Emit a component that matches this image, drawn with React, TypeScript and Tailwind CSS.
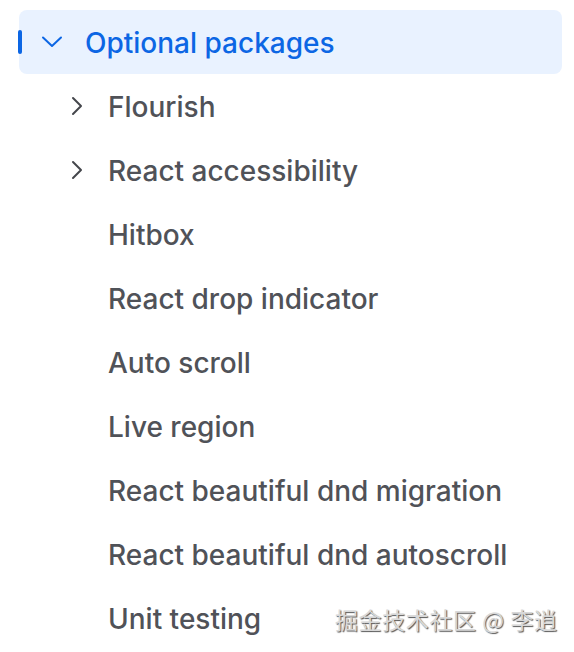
const children: { label: string; expandable?: boolean }[] = [
  { label: "Flourish", expandable: true },
  { label: "React accessibility", expandable: true },
  { label: "Hitbox" },
  { label: "React drop indicator" },
  { label: "Auto scroll" },
  { label: "Live region" },
  { label: "React beautiful dnd migration" },
  { label: "React beautiful dnd autoscroll" },
  { label: "Unit testing" },
];

function ChevronDown() {
  return (
    <svg width="22" height="12" viewBox="0 0 22 12" fill="none" className="shrink-0">
      <path d="M2 1.5 L11 10 L20 1.5" stroke="currentColor" strokeWidth="2" strokeLinecap="round" strokeLinejoin="round" />
    </svg>
  );
}

function ChevronRight() {
  return (
    <svg width="12" height="20" viewBox="0 0 12 20" fill="none" className="shrink-0">
      <path d="M2 2 L10 10 L2 18" stroke="currentColor" strokeWidth="2" strokeLinecap="round" strokeLinejoin="round" />
    </svg>
  );
}

export default function App() {
  return (
    <div className="relative h-[652px] w-[574px] overflow-hidden bg-white font-['Inter',sans-serif]">
      <div className="w-[562px] pl-[19px] pt-[10px]">
        <div className="relative flex h-[64px] items-center rounded-lg bg-[#e9f2ff] text-[#0c66e4]">
          <span className="absolute left-[-1px] top-[20px] h-[24px] w-[4px] rounded-sm bg-[#0c66e4]" />
          <span className="ml-[22px] flex w-[44px]">
            <ChevronDown />
          </span>
          <span className="pt-[2px] text-[28px] font-medium">Optional packages</span>
        </div>
        {children.map((c) => (
          <div key={c.label} className="flex h-[64px] items-center text-[#505258]">
            <span className="ml-[52px] flex w-[37px] text-[#44464b]">
              {c.expandable && <ChevronRight />}
            </span>
            <span className="pt-[2px] text-[28px] font-medium">{c.label}</span>
          </div>
        ))}
      </div>
      <div className="absolute left-[335px] top-[602px] text-[23px] tracking-[0.6px] text-[#d8d8d8] [text-shadow:1px_1px_1px_#555] font-['Noto_Sans_CJK_SC',sans-serif]">
        掘金技术社区 @ 李逍
      </div>
    </div>
  );
}
